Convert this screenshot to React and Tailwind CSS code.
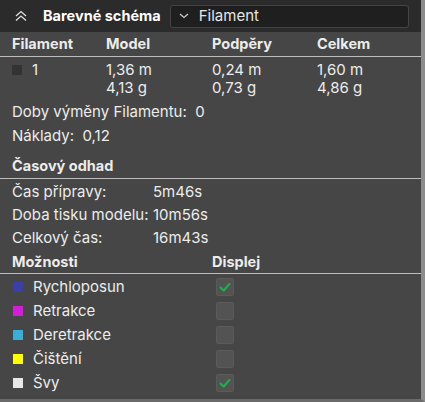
import React from "react";

const font = { fontFamily: "Inter, 'Noto Sans', sans-serif" };

function Check() {
  return (
    <svg width="14" height="14" viewBox="0 0 14 14" fill="none">
      <path d="M2.5 7.5 L5.8 10.5 L11.5 3.8" stroke="#22b04b" strokeWidth="2" strokeLinecap="round" strokeLinejoin="round" />
    </svg>
  );
}

function Box({ checked }) {
  return (
    <div className="w-[18px] h-[18px] rounded-[2px] bg-[#535353] border border-[#5a5a5a] flex items-center justify-center">
      {checked && <Check />}
    </div>
  );
}

const options = [
  { label: "Rychloposun", color: "bg-[#3b40a8]", checked: true },
  { label: "Retrakce", color: "bg-[#d21ed6]", checked: false },
  { label: "Deretrakce", color: "bg-[#3aaed4]", checked: false },
  { label: "Čištění", color: "bg-[#ffff00]", checked: false },
  { label: "Švy", color: "bg-[#e8e8e8]", checked: true },
];

export default function App() {
  return (
    <div className="w-[425px] h-[402px] bg-[#464646] text-[#ececec] text-[15px] flex flex-col border-r-[4px] border-b-[3px] border-r-[#8c8c8c] border-b-[#6a6a6a] overflow-hidden" style={font}>
      {/* header */}
      <div className="h-[32px] bg-[#2b2b2b] flex items-center shrink-0">
        <svg className="ml-[14px]" width="14" height="12" viewBox="0 0 14 12" fill="none">
          <path d="M2 6 L7 1.5 L12 6 M2 10.5 L7 6 L12 10.5" stroke="#e0e0e0" strokeWidth="1.3" />
        </svg>
        <span className="ml-[15px] font-bold text-white text-[14.5px]">Barevné schéma</span>
        <div className="ml-[9px] w-[239px] h-[23px] bg-[#1f1f1f] border border-[#444] rounded-[3px] flex items-center">
          <svg className="ml-[8px]" width="10" height="6" viewBox="0 0 10 6" fill="none">
            <path d="M1 1 L5 4.5 L9 1" stroke="#cfcfcf" strokeWidth="1.2" />
          </svg>
          <span className="ml-[10px] text-[#e6e6e6]">Filament</span>
        </div>
      </div>

      {/* filament table */}
      <div className="grid grid-cols-[94px_106px_105px_1fr] pl-[12px] h-[24px] items-center font-bold text-[14.5px]">
        <span>Filament</span>
        <span>Model</span>
        <span>Podpěry</span>
        <span>Celkem</span>
      </div>
      <div className="h-px bg-[#bdbdbd]" />
      <div className="grid grid-cols-[94px_106px_105px_1fr] pl-[12px] pt-[4px] leading-[18px]">
        <div className="flex items-start">
          <span className="mt-[4px] w-[10px] h-[10px] bg-[#333333]" />
          <span className="ml-[10px]">1</span>
        </div>
        <div className="flex flex-col"><span>1,36 m</span><span>4,13 g</span></div>
        <div className="flex flex-col"><span>0,24 m</span><span>0,73 g</span></div>
        <div className="flex flex-col"><span>1,60 m</span><span>4,86 g</span></div>
      </div>

      <div className="pl-[12px] mt-[3px] flex flex-col leading-[24px]">
        <span>Doby výměny Filamentu:&nbsp; 0</span>
        <span>Náklady:&nbsp; 0,12</span>
      </div>

      {/* time estimate */}
      <div className="pl-[12px] mt-[6px] h-[24px] flex items-center font-bold text-[14.5px]">Časový odhad</div>
      <div className="h-px bg-[#bdbdbd]" />
      <div className="pl-[12px] pt-[1px] grid grid-cols-[141px_1fr] leading-[23px]">
        <span>Čas přípravy:</span><span>5m46s</span>
        <span>Doba tisku modelu:</span><span>10m56s</span>
        <span>Celkový čas:</span><span>16m43s</span>
      </div>

      {/* options */}
      <div className="pl-[12px] mt-[2px] h-[22px] grid grid-cols-[200px_1fr] items-center font-bold text-[14.5px]">
        <span>Možnosti</span>
        <span>Displej</span>
      </div>
      <div className="h-px bg-[#bdbdbd]" />
      <div className="flex flex-col pt-[1px]">
        {options.map((o) => (
          <div key={o.label} className="h-[24px] pl-[13px] grid grid-cols-[203px_1fr] items-center">
            <div className="flex items-center">
              <span className={`w-[10px] h-[10px] ${o.color}`} />
              <span className="ml-[10px]">{o.label}</span>
            </div>
            <Box checked={o.checked} />
          </div>
        ))}
      </div>
    </div>
  );
}
